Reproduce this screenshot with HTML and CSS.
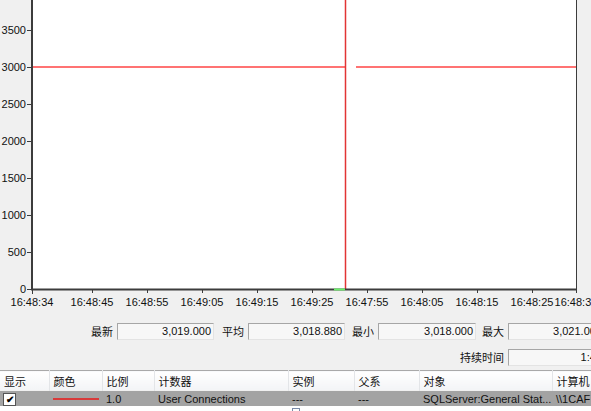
FILE: index.html
```html
<!DOCTYPE html>
<html lang="zh-CN">
<head>
    <meta charset="UTF-8">
    <meta name="viewport" content="width=device-width, initial-scale=1.0">
    <title>性能监视器</title>
    <link rel="stylesheet" href="styles.css">
</head>
<body>

    <!-- 图表: 坐标轴 + 计数器曲线 -->
    <svg class="chart" width="591" height="318" viewBox="0 0 591 318">
        <rect class="plot-bg" x="32" y="-2" width="544" height="291"></rect>

        <!-- 计数器曲线 -->
        <line class="series" x1="33" y1="67" x2="345" y2="67"></line>
        <line class="series" x1="356" y1="67" x2="576" y2="67"></line>

        <!-- 当前时间位置 -->
        <line class="cursor" x1="345.5" y1="0" x2="345.5" y2="289"></line>

        <!-- 坐标轴 -->
        <line class="axis" x1="32" y1="0" x2="32" y2="290"></line>
        <line class="axis" x1="31" y1="289.5" x2="577" y2="289.5"></line>
        <line class="axis-thin" x1="576.5" y1="0" x2="576.5" y2="290"></line>
        <line class="cursor-mark" x1="334" y1="289.5" x2="345" y2="289.5"></line>

        <g class="y-ticks">
            <line x1="27" y1="289.5" x2="32" y2="289.5"></line>
            <line x1="27" y1="252.5" x2="32" y2="252.5"></line>
            <line x1="27" y1="215.5" x2="32" y2="215.5"></line>
            <line x1="27" y1="178.5" x2="32" y2="178.5"></line>
            <line x1="27" y1="141.5" x2="32" y2="141.5"></line>
            <line x1="27" y1="104.5" x2="32" y2="104.5"></line>
            <line x1="27" y1="67.5" x2="32" y2="67.5"></line>
            <line x1="27" y1="30.5" x2="32" y2="30.5"></line>
        </g>
        <g class="y-labels">
            <text x="26" y="293">0</text>
            <text x="26" y="256">500</text>
            <text x="26" y="219">1000</text>
            <text x="26" y="182">1500</text>
            <text x="26" y="145">2000</text>
            <text x="26" y="108">2500</text>
            <text x="26" y="71">3000</text>
            <text x="26" y="34">3500</text>
        </g>

        <g class="x-ticks">
            <line x1="32.5" y1="290" x2="32.5" y2="294"></line>
            <line x1="92.5" y1="290" x2="92.5" y2="293"></line>
            <line x1="147.5" y1="290" x2="147.5" y2="293"></line>
            <line x1="202.5" y1="290" x2="202.5" y2="293"></line>
            <line x1="257.5" y1="290" x2="257.5" y2="293"></line>
            <line x1="312.5" y1="290" x2="312.5" y2="293"></line>
            <line x1="367.5" y1="290" x2="367.5" y2="293"></line>
            <line x1="422.5" y1="290" x2="422.5" y2="293"></line>
            <line x1="477.5" y1="290" x2="477.5" y2="293"></line>
            <line x1="532.5" y1="290" x2="532.5" y2="293"></line>
            <line x1="576.5" y1="290" x2="576.5" y2="293"></line>
        </g>
        <g class="x-labels">
            <text x="32" y="306">16:48:34</text>
            <text x="92" y="306">16:48:45</text>
            <text x="147" y="306">16:48:55</text>
            <text x="202" y="306">16:49:05</text>
            <text x="257" y="306">16:49:15</text>
            <text x="312" y="306">16:49:25</text>
            <text x="367" y="306">16:47:55</text>
            <text x="422" y="306">16:48:05</text>
            <text x="477" y="306">16:48:15</text>
            <text x="532" y="306">16:48:25</text>
            <text x="576" y="306">16:48:35</text>
        </g>
    </svg>

    <!-- 统计值 -->
    <div class="stats">
        <span class="stat-label">最新</span>
        <span class="stat-box">3,019.000</span>
        <span class="stat-label">平均</span>
        <span class="stat-box">3,018.880</span>
        <span class="stat-label">最小</span>
        <span class="stat-box">3,018.000</span>
        <span class="stat-label">最大</span>
        <span class="stat-box">3,021.000</span>

        <span class="stat-label stat-wide">持续时间</span>
        <span class="stat-box">1:40</span>
    </div>

    <!-- 计数器列表 -->
    <table class="counters">
        <colgroup>
            <col class="c-show">
            <col class="c-color">
            <col class="c-scale">
            <col class="c-counter">
            <col class="c-inst">
            <col class="c-parent">
            <col class="c-obj">
            <col class="c-host">
        </colgroup>
        <thead>
            <tr>
                <th>显示</th>
                <th>颜色</th>
                <th>比例</th>
                <th>计数器</th>
                <th>实例</th>
                <th>父系</th>
                <th>对象</th>
                <th>计算机</th>
            </tr>
        </thead>
        <tbody>
            <tr class="selected">
                <td><span class="check">✔</span></td>
                <td><span class="swatch"></span></td>
                <td>1.0</td>
                <td>User Connections</td>
                <td>---</td>
                <td>---</td>
                <td>SQLServer:General Stat...</td>
                <td>\\1CAF</td>
            </tr>
            <tr class="next">
                <td></td><td></td><td></td><td></td>
                <td><span class="stub"></span></td>
                <td></td><td></td><td></td>
            </tr>
        </tbody>
    </table>

</body>
</html>
```

FILE: styles.css
```css
body {
    margin: 0;
    width: 591px;
    height: 411px;
    overflow: hidden;
    background-color: #f0f0f0;
    font-family: "Liberation Sans", "Noto Sans CJK SC", sans-serif;
    font-size: 11px;
    color: #111111;
}

/* chart */
.chart {
    display: block;
}
.plot-bg {
    fill: #ffffff;
}
.series {
    stroke: #ff7373;
    stroke-width: 2;
}
.cursor {
    stroke: #e23434;
    stroke-width: 1.5;
}
.cursor-mark {
    stroke: #6cf06c;
    stroke-width: 2;
}
.axis {
    stroke: #3c3c3c;
    stroke-width: 2;
}
.axis-thin {
    stroke: #3c3c3c;
    stroke-width: 1;
}
.y-ticks line,
.x-ticks line {
    stroke: #3c3c3c;
    stroke-width: 1;
}
.y-labels text {
    text-anchor: end;
    font-size: 11px;
    fill: #111111;
}
.x-labels text {
    text-anchor: middle;
    font-size: 11px;
    fill: #111111;
}

/* stats */
.stats {
    display: grid;
    grid-template-columns: 33px 97px 34px 97px 33px 98px 32px 97px;
    row-gap: 5px;
    padding: 5px 0 0 84px;
    height: 52px;
    box-sizing: border-box;
}
.stat-label {
    text-align: right;
    padding-right: 4px;
    line-height: 17px;
    font-family: "Noto Sans CJK SC", sans-serif;
    font-size: 11px;
}
.stat-wide {
    grid-column: 1 / 8;
}
.stat-box {
    height: 17px;
    line-height: 15px;
    box-sizing: border-box;
    text-align: right;
    padding-right: 2px;
    background-color: #f7f7f7;
    border: 1px solid #e3e3e3;
    border-top-color: #a6a6a6;
    border-left-color: #a6a6a6;
    white-space: nowrap;
}

/* counter list */
.counters {
    border-collapse: collapse;
    table-layout: fixed;
    width: 612px;
    border-top: 1px solid #a9a9a9;
}
.c-show { width: 49px; }
.c-color { width: 53px; }
.c-scale { width: 52px; }
.c-counter { width: 134px; }
.c-inst { width: 66px; }
.c-parent { width: 65px; }
.c-obj { width: 133px; }
.c-host { width: 60px; }

.counters th {
    height: 19px;
    padding: 0 0 0 4px;
    text-align: left;
    font-weight: normal;
    font-family: "Noto Sans CJK SC", sans-serif;
    font-size: 11px;
    background: linear-gradient(#ffffff, #f3f4f6);
    border-right: 1px solid #e3e5e8;
    white-space: nowrap;
}
.counters td {
    height: 15px;
    padding: 0 0 0 4px;
    white-space: nowrap;
    overflow: hidden;
}

.selected td {
    background-color: #a3a3a3;
    border-top: 1px solid #f0f0f0;
}
.selected td:first-child {
    padding-left: 3px;
}
.check {
    display: inline-block;
    width: 11px;
    height: 11px;
    margin-top: 1px;
    line-height: 11px;
    text-align: center;
    font-size: 10px;
    font-weight: bold;
    background-color: #ffffff;
    border: 1px solid #555555;
    color: #000000;
    vertical-align: top;
}
.swatch {
    display: block;
    width: 46px;
    height: 2px;
    background-color: #d83a3a;
}
.next td {
    height: 6px;
    background-color: #ffffff;
}
.stub {
    display: block;
    width: 6px;
    height: 4px;
    margin-top: 2px;
    border: 1px solid #7a8aa8;
    border-bottom: none;
}
```
